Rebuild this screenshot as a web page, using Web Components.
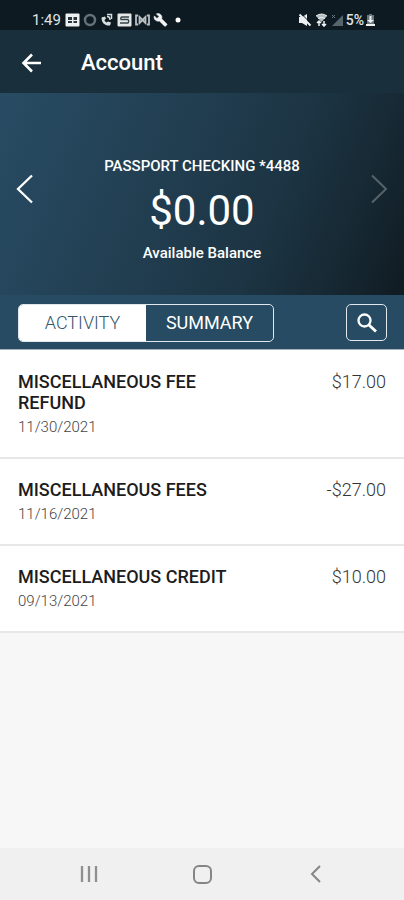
<!DOCTYPE html>
<html lang="en">
<head>
<meta charset="utf-8">
<meta name="viewport" content="width=device-width, initial-scale=1">
<title>Account</title>
<style>
  html, body { margin: 0; min-height: 100%; }
  body { font-family: Roboto, "Liberation Sans", sans-serif; background: #f7f7f7; color: #222; }
</style>
</head>
<body>
<account-screen></account-screen>
<script>
const define = (name, html) => {
  const template = document.createElement('template');
  template.innerHTML = '<style>*{box-sizing:border-box}button{font:inherit;color:inherit;background:none;border:0;padding:0;margin:0;cursor:pointer}svg{display:block}</style>' + html;
  customElements.define(name, class extends HTMLElement {
    constructor() {
      super();
      this.attachShadow({ mode: 'open' }).append(template.content.cloneNode(true));
    }
  });
};

define('status-bar', `
<style>
  :host { display: flex; justify-content: space-between; align-items: center; height: 30px; padding: 10px 29px 0 32px; background: #0d1a21; color: #dfe3e5; font-size: 15px; line-height: 20px; }
  .group { display: flex; align-items: center; gap: 3px; }
  .clock { margin-right: 1px; }
  .dot { margin-left: 4px; }
  .signals { gap: 2px; font-size: 14px; font-weight: 500; }
</style>
<div class="group">
  <span class="clock">1:49</span>
  <svg width="15" height="14" viewBox="0 0 15 14"><rect x=".5" y=".5" width="14" height="13" rx="1" fill="#edf0f1"/><path d="M3 4h4v3H3zM8.500 4h3.500v3H8.500zM3 8h4v2H3zM8.500 8h3.500v2H8.500z" fill="#29343a"/></svg>
  <svg width="14" height="14" viewBox="0 0 14 14"><circle cx="7" cy="7" r="5" fill="none" stroke="#65727a" stroke-width="2.500"/></svg>
  <svg width="14" height="14" viewBox="0 0 14 14"><path d="M1.500 4.500C1.500 10 5 13 10 12.500l1-3-3-1-1.500 1C5 8.500 4.500 7.500 4.500 7L6 5.500 5 3.500z" fill="#d8dddf"/><path d="M7 3.500Q10 3.500 10 7M7 1.500h4.500V6" fill="none" stroke="#d8dddf" stroke-width="1.500"/></svg>
  <svg width="15" height="14" viewBox="0 0 15 14"><rect x=".5" y=".5" width="14" height="13" rx="1" fill="#e5e8e9"/><path d="M12 4H5Q3 4.500 4 6.500H11Q12.500 8 11 10H3" fill="none" stroke="#354047" stroke-width="1.300"/></svg>
  <svg width="15" height="14" viewBox="0 0 15 14"><path d="M3 2.500H1v9h2M12 2.500h2v9h-2M4.500 4v6l3-3 3 3V4l-3 3z" fill="none" stroke="#b9c0c4" stroke-width="1.800"/></svg>
  <svg width="15" height="14" viewBox="0 0 24 24"><path fill="#f1f3f4" stroke="#f1f3f4" d="M23 19l-9-9c1-2 .5-5-1.500-7S7.500.5 5 1.500l4.500 4.500L6 9.500 1.500 5C.5 7.500 1 10 3 12s5 2.500 7 1.500l9 9c.5.500 1 .5 1.500 0l2.500-2.300c.4-.4.4-.9 0-1.200z"/></svg>
  <svg class="dot" width="6" height="6" viewBox="0 0 6 6"><circle cx="3" cy="3" r="2.500" fill="#fff"/></svg>
</div>
<div class="group signals">
  <svg width="14" height="14" viewBox="0 0 14 14"><path d="M1 4h3l5-3v12L4 10H1z" fill="#edf0f1"/><path d="M3 .5l10 10" stroke="#0d1a21" stroke-width="1"/><path d="M1.500 1.500l11 11" stroke="#edf0f1" stroke-width="2"/></svg>
  <svg width="15" height="14" viewBox="0 0 15 14"><path d="M2 3Q7.500-1 13 3L7.500 9z" fill="#b5bdc1"/><path d="M2 3Q7.500-1 13 3M4 5.500Q7.500 3 11 5.500" fill="none" stroke="#edf0f1"/><path d="M5 8v5M3 10l2-2 2 2M10 8v5M8 11l2 2 2-2" fill="none" stroke="#edf0f1" stroke-width="1.500"/></svg>
  <svg width="13" height="14" viewBox="0 0 13 14"><path d="M12 2v11H1z" fill="#56646c"/><path d="M1 2l3 3M4 2L1 5" stroke="#6e7a81"/></svg>
  <span>5%</span>
  <svg width="9" height="14" viewBox="0 0 9 14"><path d="M3 1h3v1h2v9H1V2h2z" fill="#69767d"/><path d="M3.500 3h2v4H8L4.500 10 1 7h2.500zM0 11h9v2H0z" fill="#edf0f1"/></svg>
</div>`);

define('app-header', `
<style>
  :host { display: flex; align-items: center; gap: 38px; height: 63px; padding: 2px 21px 0; background: #1a2f3c; color: #fff; }
  h1 { margin: 0; padding-top: 1px; font-size: 22px; line-height: 28px; font-weight: 500; }
</style>
<button aria-label="Back"><svg width="22" height="22" viewBox="0 0 22 22" fill="none" stroke="#fff" stroke-width="2.600"><path d="M20 11H3M11 2.500L2.500 11l8.500 8.500"/></svg></button>
<h1><slot></slot></h1>`);

define('balance-card', `
<style>
  :host { display: flex; align-items: center; justify-content: space-between; height: 202px; padding: 0 14px; color: #fff; background: linear-gradient(112deg, #284c64 0%, #223f52 38%, #1c3443 66%, #172a35 82%, #101b22 100%); }
  .details { display: flex; flex-direction: column; align-items: center; padding-top: 31px; text-align: center; }
  h2 { margin: 0; font-size: 15px; line-height: 20px; font-weight: 500; }
  .amount { margin: 9px 0 6px; font-size: 42px; line-height: 52px; font-weight: 400; }
  .caption { font-size: 15px; line-height: 20px; font-weight: 500; }
  button { padding-bottom: 10px; }
  button:disabled { opacity: .28; }
</style>
<button aria-label="Previous account"><svg width="22" height="30" viewBox="0 0 22 30" fill="none" stroke="#fff" stroke-width="2.300"><path d="M18 1.500L4 15l14 13.500"/></svg></button>
<div class="details">
  <h2><slot name="name"></slot></h2>
  <div class="amount"><slot name="amount"></slot></div>
  <div class="caption"><slot name="caption"></slot></div>
</div>
<button aria-label="Next account" disabled><svg width="22" height="30" viewBox="0 0 22 30" fill="none" stroke="#fff" stroke-width="2"><path d="M4 1.500L18 15 4 28.500"/></svg></button>`);

define('view-toolbar', `
<style>
  :host { display: flex; align-items: center; justify-content: space-between; height: 55px; padding: 1px 17px 0 18px; background: #264b62; border-bottom: 1px solid #a5b3bf; color: #fff; }
  .tabs { display: grid; grid-template-columns: 1fr 1fr; width: 256px; height: 38px; border: 1px solid #e1e7eb; border-radius: 5px; overflow: hidden; }
  .tabs button { padding-top: 1px; font-size: 18px; line-height: 24px; }
  .tabs button[aria-selected=true] { background: #fff; color: #34566b; font-weight: 300; }
  .search { display: grid; place-items: center; width: 41px; height: 37px; border: 1px solid #e1e7eb; border-radius: 5px; }
</style>
<div class="tabs" role="tablist">
  <button role="tab" aria-selected="true">ACTIVITY</button>
  <button role="tab" aria-selected="false">SUMMARY</button>
</div>
<button class="search" aria-label="Search"><svg width="20" height="20" viewBox="0 0 20 20" fill="none" stroke="#fff"><circle cx="7.500" cy="7.500" r="6" stroke-width="2.300"/><path d="M12 12l7 6.500" stroke-width="3"/></svg></button>`);

define('transaction-row', `
<style>
  :host { display: flex; justify-content: space-between; align-items: flex-start; gap: 48px; padding: 20px 18px; background: #fff; border-bottom: 2px solid #e7e7e7; }
  .info { display: flex; flex-direction: column; gap: 4px; flex: 0 1 216px; }
  .title { font-size: 18px; line-height: 21px; font-weight: 500; color: #1c1c1c; }
  .date { font-size: 15px; line-height: 20px; font-weight: 300; color: #444; }
  .amount { font-size: 18px; line-height: 21px; font-weight: 300; color: #333; white-space: nowrap; }
</style>
<div class="info">
  <div class="title"><slot></slot></div>
  <div class="date"><slot name="date"></slot></div>
</div>
<div class="amount"><slot name="amount"></slot></div>`);

define('system-nav', `
<style>
  :host { display: flex; justify-content: center; align-items: center; gap: 89px; height: 52px; background: #f0f0f0; }
</style>
<button aria-label="Recent apps"><svg width="24" height="24" viewBox="0 0 24 24" stroke="#8f8f8f" stroke-width="2.300"><path d="M5 4v16M12 4v16M19 4v16"/></svg></button>
<button aria-label="Home"><svg width="24" height="24" viewBox="0 0 24 24" fill="none" stroke="#858585" stroke-width="2"><rect x="4" y="4" width="17" height="17" rx="5"/></svg></button>
<button aria-label="Back"><svg width="24" height="24" viewBox="0 0 24 24" fill="none" stroke="#858585" stroke-width="2"><path d="M17 4l-8 8 8 8"/></svg></button>`);

define('account-screen', `
<style>
  :host { display: flex; flex-direction: column; min-height: 100vh; }
  main { flex: 1; }
  .list { padding-top: 1px; background: linear-gradient(#fff, #fff) top / 100% 1px no-repeat; }
</style>
<status-bar></status-bar>
<app-header>Account</app-header>
<main>
  <balance-card>
    <span slot="name">PASSPORT CHECKING *4488</span>
    <span slot="amount">$0.00</span>
    <span slot="caption">Available Balance</span>
  </balance-card>
  <view-toolbar></view-toolbar>
  <div class="list">
    <transaction-row>MISCELLANEOUS FEE REFUND<span slot="date">11/30/2021</span><span slot="amount">$17.00</span></transaction-row>
    <transaction-row>MISCELLANEOUS FEES<span slot="date">11/16/2021</span><span slot="amount">-$27.00</span></transaction-row>
    <transaction-row>MISCELLANEOUS CREDIT<span slot="date">09/13/2021</span><span slot="amount">$10.00</span></transaction-row>
  </div>
</main>
<system-nav></system-nav>`);
</script>
</body>
</html>
